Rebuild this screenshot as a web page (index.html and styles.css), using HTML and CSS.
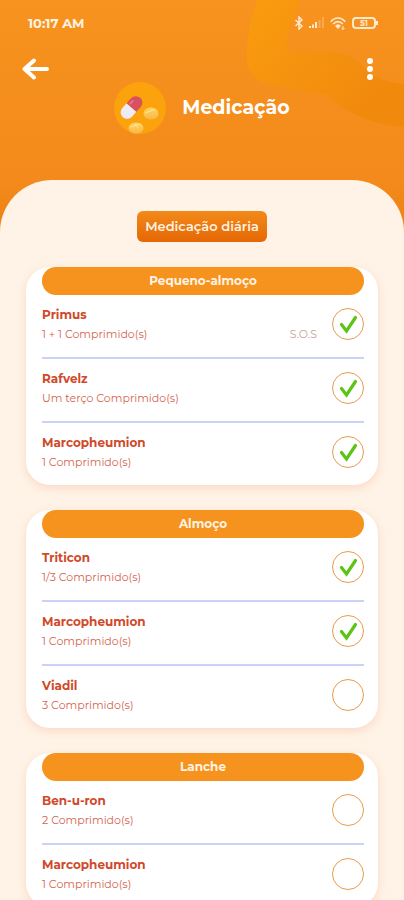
FILE: index.html
```
<!DOCTYPE html>
<html lang="pt">
<head>
    <meta charset="UTF-8">
    <meta name="viewport" content="width=device-width, initial-scale=1.0">
    <title>Medicação</title>
    <link rel="stylesheet" href="styles.css">
</head>
<body>
    <svg class="symbols" width="0" height="0" aria-hidden="true">
        <symbol id="check" viewBox="0 0 32 32">
            <path d="M9.500 16.500l5 6.500 9-13.500" fill="none" stroke="#5cc414" stroke-width="3.200" stroke-linecap="round" stroke-linejoin="miter"/>
        </symbol>
    </svg>

    <header class="header">
        <svg class="header-shape" viewBox="0 0 160 130" aria-hidden="true">
            <defs>
                <linearGradient id="shapeFill" x1="0" y1="0" x2="1" y2="0.6">
                    <stop offset="0" stop-color="#f99c0e"/>
                    <stop offset="0.5" stop-color="#f5920f"/>
                    <stop offset="1" stop-color="#f1890c"/>
                </linearGradient>
            </defs>
            <path d="M13 0C6 20 2 45 3 60C4 76 14 82 30 86L84 95C102 114 130 125 160 127V84C142 82 128 78 116 64C108 55 98 52 84 52L52 51C44 51 42 46 43 38C45 24 52 12 57 0Z" fill="url(#shapeFill)"/>
        </svg>

        <div class="status-bar">
            <span class="time">10:17 AM</span>
            <div class="status-icons">
                <svg width="8" height="14" viewBox="0 0 8 14" fill="none" stroke="#ffe9cf" stroke-width="1.500">
                    <path d="M0.500 4l6.500 6-3 3V1l3 3-6.500 6"/>
                </svg>
                <svg width="15" height="12" viewBox="0 0 15 12" fill="#ffe9cf">
                    <rect x="0" y="9" width="2" height="2"/>
                    <rect x="3" y="7.500" width="2" height="3.500"/>
                    <rect x="6" y="5" width="2" height="6"/>
                    <rect x="9.500" y="3" width="2" height="8" opacity="0.3"/>
                    <rect x="13" y="0" width="2" height="11" opacity="0.3"/>
                </svg>
                <svg width="16" height="13" viewBox="0 0 16 13" fill="none" stroke="#ffe9cf" stroke-width="1.600">
                    <path d="M0.800 4.800C5-0.200 11-0.200 15.200 4.800M3.200 7c3-3.200 6.600-3.200 9.600 0"/>
                    <path d="M5 8.800c2-2 4-2 6 0L8 12z" fill="#ffe9cf" stroke="none"/>
                    <path d="M13 9v3.500M11.500 11l1.500 1.500 1.500-1.500" stroke-width="1"/>
                </svg>
                <div class="battery"><span>51</span></div>
            </div>
        </div>

        <nav class="toolbar">
            <button type="button" class="icon-button" aria-label="Voltar">
                <svg width="27" height="22" viewBox="0 0 27 22" fill="none" stroke="#fff" stroke-width="4" stroke-linecap="round" stroke-linejoin="round">
                    <path d="M12 2.500L2.500 11l9.500 8.500M3 11h22"/>
                </svg>
            </button>
            <button type="button" class="icon-button" aria-label="Mais opções">
                <svg width="6" height="22" viewBox="0 0 6 22" fill="#fff">
                    <circle cx="3" cy="3" r="3"/>
                    <circle cx="3" cy="11" r="3"/>
                    <circle cx="3" cy="19" r="3"/>
                </svg>
            </button>
        </nav>

        <div class="title">
            <svg width="52" height="52" viewBox="0 0 52 52" aria-hidden="true">
                <defs>
                    <linearGradient id="tablet" x1="0" y1="0" x2="0" y2="1">
                        <stop offset="0" stop-color="#ffd65e"/>
                        <stop offset="1" stop-color="#f9b64a"/>
                    </linearGradient>
                </defs>
                <circle cx="26" cy="26" r="26" fill="#fba20c"/>
                <g transform="translate(17.500 25.500) rotate(-48)">
                    <path d="M0-6.500h-6.500a6.500 6.500 0 0 0 0 13H0z" fill="#eeebf6"/>
                    <path d="M0-6.500h6.500a6.500 6.500 0 0 1 0 13H0z" fill="#d9515f"/>
                    <path d="M2-3.500h4" stroke="#e8808a" stroke-width="1.500" stroke-linecap="round"/>
                </g>
                <ellipse cx="37" cy="31.500" rx="7.500" ry="6" fill="url(#tablet)"/>
                <path d="M31 31l10-3.500" stroke="#ffe59a"/>
                <ellipse cx="22" cy="46" rx="7.500" ry="5.500" fill="url(#tablet)"/>
                <path d="M16 45l11-3M21 42l3 4" stroke="#ffe59a"/>
            </svg>
            <h1>Medicação</h1>
        </div>
    </header>

    <main class="panel">
        <h2 class="badge">Medicação diária</h2>

        <section class="card">
            <h3>Pequeno-almoço</h3>
            <label class="med">
                <span class="info"><b>Primus</b><small>1 + 1 Comprimido(s)</small></span>
                <span class="note">S.O.S</span>
                <span class="tick"><input type="checkbox" checked><svg><use href="#check"/></svg></span>
            </label>
            <label class="med">
                <span class="info"><b>Rafvelz</b><small>Um terço Comprimido(s)</small></span>
                <span class="tick"><input type="checkbox" checked><svg><use href="#check"/></svg></span>
            </label>
            <label class="med">
                <span class="info"><b>Marcopheumion</b><small>1 Comprimido(s)</small></span>
                <span class="tick"><input type="checkbox" checked><svg><use href="#check"/></svg></span>
            </label>
        </section>

        <section class="card">
            <h3>Almoço</h3>
            <label class="med">
                <span class="info"><b>Triticon</b><small>1/3 Comprimido(s)</small></span>
                <span class="tick"><input type="checkbox" checked><svg><use href="#check"/></svg></span>
            </label>
            <label class="med">
                <span class="info"><b>Marcopheumion</b><small>1 Comprimido(s)</small></span>
                <span class="tick"><input type="checkbox" checked><svg><use href="#check"/></svg></span>
            </label>
            <label class="med">
                <span class="info"><b>Viadil</b><small>3 Comprimido(s)</small></span>
                <span class="tick"><input type="checkbox"><svg><use href="#check"/></svg></span>
            </label>
        </section>

        <section class="card">
            <h3>Lanche</h3>
            <label class="med">
                <span class="info"><b>Ben-u-ron</b><small>2 Comprimido(s)</small></span>
                <span class="tick"><input type="checkbox"><svg><use href="#check"/></svg></span>
            </label>
            <label class="med">
                <span class="info"><b>Marcopheumion</b><small>1 Comprimido(s)</small></span>
                <span class="tick"><input type="checkbox"><svg><use href="#check"/></svg></span>
            </label>
        </section>
    </main>
</body>
</html>
```
FILE: styles.css
```
* {
    box-sizing: border-box;
}

body {
    font-family: Montserrat, Inter, sans-serif;
    margin: 0;
    height: 100vh;
    display: flex;
    flex-direction: column;
    overflow: hidden;
    background: linear-gradient(#f7931e, #f38a1b 180px, #ee8012 240px);
}

h1, h2, h3 {
    margin: 0;
}

.symbols {
    position: absolute;
}

/* Header */
.header {
    position: relative;
    flex: none;
    height: 180px;
    color: #fff;
}

.header-shape {
    position: absolute;
    top: 0;
    right: 0;
    width: 160px;
    height: 130px;
}

.status-bar,
.toolbar,
.title {
    position: relative;
    display: flex;
    align-items: center;
}

.status-bar {
    justify-content: space-between;
    height: 46px;
    padding: 0 26px 0 28px;
}

.time {
    font-size: 13px;
    font-weight: 700;
    color: #fff3e2;
}

.status-icons {
    display: flex;
    align-items: center;
    gap: 6px;
}

.battery {
    position: relative;
    width: 24px;
    height: 12px;
    margin-right: 2px;
    border: 2px solid #ffe9cf;
    border-radius: 4px;
    font-size: 8px;
    font-weight: 700;
    line-height: 8px;
    text-align: center;
    color: #ffe9cf;
}

.battery::after {
    content: "";
    position: absolute;
    top: 2px;
    right: -4px;
    width: 2px;
    height: 4px;
    background: #ffe9cf;
}

.toolbar {
    justify-content: space-between;
    height: 46px;
    padding: 0 31px 0 22px;
}

.icon-button {
    display: flex;
    padding: 0;
    border: none;
    background: none;
    cursor: pointer;
}

.title {
    justify-content: center;
    gap: 16px;
    margin-top: -10px;
}

.title h1 {
    font-size: 19px;
    line-height: 24px;
}

/* Content */
.panel {
    flex: 1;
    display: flex;
    flex-direction: column;
    align-items: center;
    gap: 25px;
    padding: 31px 26px 25px;
    overflow-y: auto;
    scrollbar-width: none;
    background: #fef3e6;
    border-radius: 52px 52px 0 0;
}

.badge {
    flex: none;
    padding: 0 8px;
    border-radius: 6px;
    background: linear-gradient(#f28a1a, #e56704);
    color: #fff3e2;
    font-size: 13px;
    font-weight: 600;
    line-height: 31px;
}

.card {
    flex: none;
    width: 100%;
    padding: 0 14px 0 16px;
    background: #fff;
    border-radius: 24px;
    box-shadow: 0 3px 8px rgba(240, 110, 70, 0.2);
}

.card h3 {
    border-radius: 14px;
    background: #f6921e;
    color: #fff3e2;
    font-size: 12px;
    font-weight: 700;
    line-height: 28px;
    text-align: center;
}

.med {
    display: flex;
    align-items: center;
    height: 62px;
    padding-bottom: 4px;
    cursor: pointer;
}

.med + .med {
    height: 64px;
    border-top: 2px solid #c9d2f7;
}

.info {
    flex: 1;
    display: flex;
    flex-direction: column;
}

.info b {
    color: #d0492a;
    font-size: 12px;
    font-weight: 700;
    line-height: 20px;
}

.info small {
    color: #d4644f;
    font-size: 11px;
    line-height: 18px;
}

.note {
    align-self: flex-end;
    margin: 0 15px 10px 0;
    color: #c9a3a0;
    font-size: 11px;
    line-height: 18px;
}

.tick {
    display: grid;
    width: 32px;
    height: 32px;
}

.tick input,
.tick svg {
    grid-area: 1 / 1;
    width: 32px;
    height: 32px;
    margin: 0;
}

.tick input {
    appearance: none;
    border: 1px solid #eb9a4c;
    border-radius: 50%;
    cursor: pointer;
}

.tick svg {
    visibility: hidden;
    pointer-events: none;
}

.tick input:checked + svg {
    visibility: visible;
}
```
